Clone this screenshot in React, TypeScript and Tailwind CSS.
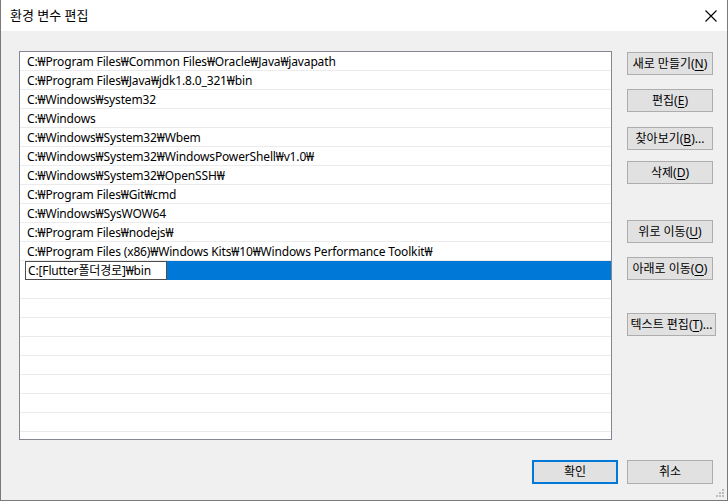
import React from 'react';

const font = { fontFamily: '"Noto Sans", "Noto Sans CJK KR", sans-serif' };

const paths = [
  'C:₩Program Files₩Common Files₩Oracle₩Java₩javapath',
  'C:₩Program Files₩Java₩jdk1.8.0_321₩bin',
  'C:₩Windows₩system32',
  'C:₩Windows',
  'C:₩Windows₩System32₩Wbem',
  'C:₩Windows₩System32₩WindowsPowerShell₩v1.0₩',
  'C:₩Windows₩System32₩OpenSSH₩',
  'C:₩Program Files₩Git₩cmd',
  'C:₩Windows₩SysWOW64',
  'C:₩Program Files₩nodejs₩',
  'C:₩Program Files (x86)₩Windows Kits₩10₩Windows Performance Toolkit₩',
];

// label + mnemonic letter, rendered as "label(<u>K</u>)suffix"
const Btn = ({ label, k, suffix = '', className = '' }: { label: string; k?: string; suffix?: string; className?: string }) => (
  <button
    className={`h-[23px] bg-[#e1e1e1] border border-[#adadad] text-[12px] text-black flex items-center justify-center leading-none whitespace-nowrap ${className}`}
  >
    {label}
    {k && (
      <>
        (<span className="underline underline-offset-2">{k}</span>)
      </>
    )}
    {suffix}
  </button>
);

export default function App() {
  return (
    <div className="w-[728px] h-[501px] bg-[#f0f0f0] border border-[#7a7a7a] border-t-0 flex flex-col" style={font}>
      {/* title bar */}
      <div className="h-[31px] bg-white flex items-center justify-between pl-[9px] pr-[8px] shrink-0">
        <span className="text-[13px] text-black">환경 변수 편집</span>
        <svg width="12" height="12" viewBox="0 0 12 12" className="mr-[2px]">
          <path d="M0.5 0.5 L11.5 11.5 M11.5 0.5 L0.5 11.5" stroke="#000" strokeWidth="1.1" />
        </svg>
      </div>

      <div className="flex pl-[18px] pt-[20px]">
        {/* list */}
        <div className="w-[593px] h-[389px] bg-white border border-[#828790] overflow-hidden shrink-0 tracking-[-0.15px]">
          {Array.from({ length: 21 }).map((_, i) => {
            if (i === 11) {
              return (
                <div key={i} className="h-[19px] flex items-stretch">
                  <div className="w-[5px] shrink-0 bg-white" />
                  <div className="w-[142px] shrink-0 h-[19px] bg-white border border-[#4d4d4d] flex items-center pl-[2px] text-[12px] text-black">
                    C:[Flutter폴더경로]₩bin
                  </div>
                  <div className="flex-1 bg-[#0078d7]" />
                </div>
              );
            }
            return (
              <div key={i} className="h-[19px] border-b border-[#ebebeb] flex items-center pl-[7px] pt-[1px] text-[12px] text-black">
                {paths[i] ?? ''}
              </div>
            );
          })}
        </div>

        {/* side buttons */}
        <div className="flex flex-col ml-[15px] pt-[1px]">
          <Btn label="새로 만들기" k="N" className="w-[86px]" />
          <Btn label="편집" k="E" className="w-[86px] mt-[14px]" />
          <Btn label="찾아보기" k="B" suffix="..." className="w-[86px] mt-[15px]" />
          <Btn label="삭제" k="D" className="w-[86px] mt-[11px]" />
          <Btn label="위로 이동" k="U" className="w-[86px] mt-[36px]" />
          <Btn label="아래로 이동" k="O" className="w-[86px] mt-[14px]" />
          <Btn label="텍스트 편집" k="T" suffix="..." className="w-[89px] mt-[33px]" />
        </div>
      </div>

      {/* bottom buttons */}
      <div className="flex justify-end gap-[9px] pr-[14px] mt-[20px]">
        <button className="w-[86px] h-[24px] bg-[#e1e1e1] border-2 border-[#0078d7] text-[12px] text-black">확인</button>
        <button className="w-[86px] h-[24px] bg-[#e1e1e1] border border-[#adadad] text-[12px] text-black">취소</button>
      </div>

      {/* size grip */}
      <div className="flex justify-end pr-[3px] mt-auto pb-[3px]">
        <svg width="8" height="8" viewBox="0 0 8 8">
          {[
            [6, 0],
            [3, 3],
            [6, 3],
            [0, 6],
            [3, 6],
            [6, 6],
          ].map(([x, y], i) => (
            <rect key={i} x={x} y={y} width="2" height="2" fill="#bcbcbc" />
          ))}
        </svg>
      </div>
    </div>
  );
}
